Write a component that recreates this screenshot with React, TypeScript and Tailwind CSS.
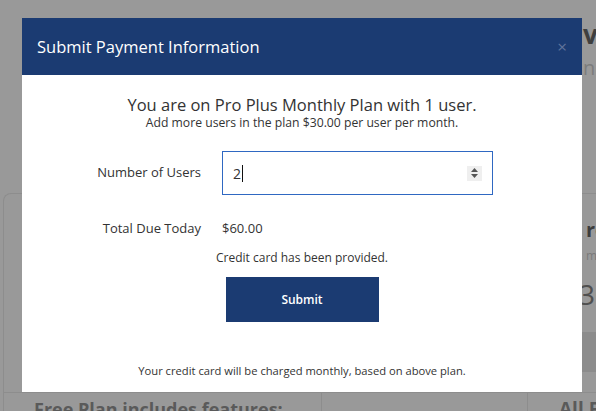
import React from "react";

function Spinner() {
  return (
    <span className="flex h-[15px] w-[15px] flex-col items-center justify-center gap-[2px] bg-[#efefef]">
      <svg width="7" height="4" viewBox="0 0 7 4"><path d="M3.5 0L7 4H0z" fill="#555" /></svg>
      <svg width="7" height="4" viewBox="0 0 7 4"><path d="M0 0h7L3.5 4z" fill="#555" /></svg>
    </span>
  );
}

export default function App() {
  return (
    <div className="relative h-[411px] w-[596px] overflow-hidden bg-[#999999] font-['Open_Sans',sans-serif]">

      {/* Page behind the overlay */}
      <div className="flex flex-col">
        <div className="h-[193px] pl-[583px] pt-[19px] whitespace-nowrap">
          <div className="text-[26px] font-bold leading-[30px] text-[#3f3f3f]">vi</div>
          <div className="mt-[6px] text-[20px] leading-[26px] text-[#7d7d7d]">n</div>
        </div>
        <div className="ml-[3px] rounded-tl-[8px] border-l border-t border-[#8d8d8d] whitespace-nowrap">
          <div className="flex h-[198px]">
            <div className="w-[318px] shrink-0" />
            <div className="w-[206px] shrink-0" />
            <div className="flex-1 pl-[58px] pt-[24px]">
              <div className="text-[20px] font-bold leading-[24px] text-[#3d3d3d]">ro</div>
              <div className="mt-[5px] text-[12px] text-[#7a7a7a]">mi</div>
              <div className="-ml-[7px] mt-[12px] text-[28px] leading-[34px] text-[#505050]">30</div>
              <div className="-ml-[10px] mt-[21px] h-[40px] bg-[#8c8c8c]" />
            </div>
          </div>
          <div className="flex border-t border-[#8d8d8d]">
            <div className="w-[318px] shrink-0 overflow-hidden border-r border-[#8d8d8d] pl-[30px] pt-[1px] text-[18px] font-bold leading-[30px] text-[#5a5a5a]">
              Free Plan includes features:
            </div>
            <div className="w-[206px] shrink-0 border-r border-[#8d8d8d]" />
            <div className="flex-1 pl-[31px] pt-[1px] text-[19px] font-bold leading-[30px] text-[#5a5a5a]">
              All Features
            </div>
          </div>
        </div>
      </div>

      {/* Modal */}
      <div className="absolute left-[22px] top-[18px] flex h-[374px] w-[560px] flex-col bg-white text-[#333333]">
        <div className="flex h-[57px] items-center justify-between bg-[#1b3b72] pl-[15px] pr-[15px]">
          <h4 className="text-[16.5px] leading-[24px] text-white">Submit Payment Information</h4>
          <span className="text-[17px] leading-none text-[#60749b]">×</span>
        </div>

        <div className="flex flex-1 flex-col items-center pt-[19px]">
          <p className="text-[16.5px] leading-[21px]">You are on Pro Plus Monthly Plan with 1 user.</p>
          <p className="text-[12.2px] leading-[15px]">Add more users in the plan $30.00 per user per month.</p>

          <div className="mt-[21px] flex w-full items-center">
            <label className="w-[179px] text-right text-[13px]">Number of Users</label>
            <div className="ml-[21px] flex h-[44px] w-[271px] items-center justify-between border border-[#2f68c2] pl-[10px] pr-[10px]">
              <span className="flex items-center text-[14px]">
                2<span className="ml-[1px] h-[17px] w-px bg-[#111]" />
              </span>
              <Spinner />
            </div>
          </div>

          <div className="mt-[23px] flex w-full items-center">
            <span className="w-[179px] text-right text-[13px] leading-[20px]">Total Due Today</span>
            <span className="ml-[21px] text-[13px] leading-[20px]">$60.00</span>
          </div>

          <p className="mt-[11px] text-[12px] leading-[18px]">Credit card has been provided.</p>

          <button className="mt-[10px] h-[45px] w-[153px] bg-[#1b3b72] text-[12px] font-semibold text-white">
            Submit
          </button>

          <p className="mt-[41px] text-[11.2px] leading-[16px]">Your credit card will be charged monthly, based on above plan.</p>
        </div>
      </div>
    </div>
  );
}
